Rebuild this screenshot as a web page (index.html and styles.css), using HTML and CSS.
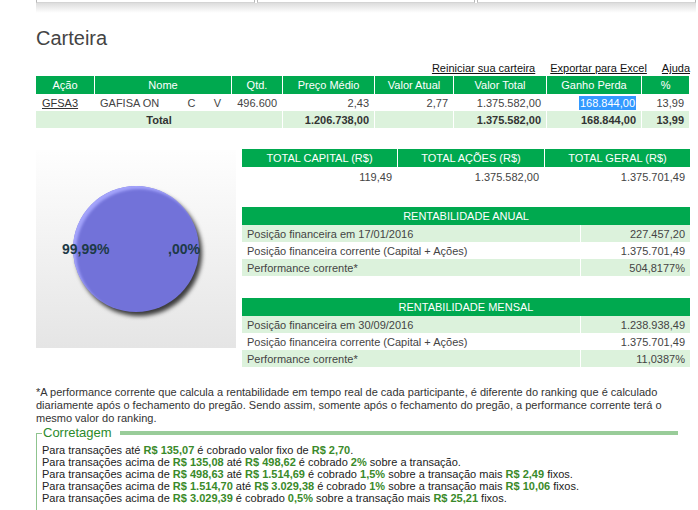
FILE: index.html
```html
<!DOCTYPE html>
<html lang="pt-BR">
<head>
<meta charset="utf-8">
<title>Carteira</title>
<link rel="stylesheet" href="styles.css">
</head>
<body>
<div class="topbar"><div class="tb-cell"></div><div class="tb-cell"></div><div class="tb-cell"></div></div>
<div class="topshadow"></div>
<main class="page">
  <h1 class="title">Carteira</h1>
  <nav class="links">
    <a href="#">Reiniciar sua carteira</a>
    <a href="#">Exportar para Excel</a>
    <a href="#">Ajuda</a>
  </nav>
  <table class="grid port">
    <colgroup>
      <col class="w58"><col class="w85"><col class="w24"><col class="w28"><col class="w51">
      <col class="w92"><col class="w79"><col class="w93"><col class="w95"><col class="w48">
    </colgroup>
    <thead>
      <tr><th>Ação</th><th colspan="3">Nome</th><th>Qtd.</th><th>Preço Médio</th><th>Valor Atual</th><th>Valor Total</th><th>Ganho Perda</th><th>%</th></tr>
    </thead>
    <tbody>
      <tr class="row">
        <td class="l pad6"><a href="#">GFSA3</a></td>
        <td class="l">GAFISA ON</td>
        <td class="c">C</td>
        <td class="c">V</td>
        <td class="r">496.600</td>
        <td class="r">2,43</td>
        <td class="r">2,77</td>
        <td class="r">1.375.582,00</td>
        <td class="r"><span class="sel">168.844,00</span></td>
        <td class="r">13,99</td>
      </tr>
      <tr class="tot">
        <td colspan="5" class="c">Total</td>
        <td class="r">1.206.738,00</td>
        <td></td>
        <td class="r">1.375.582,00</td>
        <td class="r">168.844,00</td>
        <td class="r">13,99</td>
      </tr>
    </tbody>
  </table>

  <section class="summary">
    <div class="chart">
      <div class="pie"></div>
      <span class="plabel pl-a">99,99%</span>
      <span class="plabel pl-b">,00%</span>
    </div>
    <div class="side">
      <table class="grid totals">
        <colgroup><col class="w155"><col class="w147"><col class="w146"></colgroup>
        <thead><tr><th>TOTAL CAPITAL (R$)</th><th>TOTAL AÇÕES (R$)</th><th>TOTAL GERAL (R$)</th></tr></thead>
        <tbody><tr class="row tall"><td class="r">119,49</td><td class="r">1.375.582,00</td><td class="r">1.375.701,49</td></tr></tbody>
      </table>

      <table class="grid rent">
        <colgroup><col class="w338"><col class="w110"></colgroup>
        <thead><tr><th colspan="2">RENTABILIDADE ANUAL</th></tr></thead>
        <tbody>
          <tr class="lg"><td class="l">Posição financeira em 17/01/2016</td><td class="r">227.457,20</td></tr>
          <tr class="row"><td class="l">Posição financeira corrente (Capital + Ações)</td><td class="r">1.375.701,49</td></tr>
          <tr class="lg"><td class="l">Performance corrente*</td><td class="r">504,8177%</td></tr>
        </tbody>
      </table>

      <table class="grid rent rent2">
        <colgroup><col class="w338"><col class="w110"></colgroup>
        <thead><tr><th colspan="2">RENTABILIDADE MENSAL</th></tr></thead>
        <tbody>
          <tr class="lg"><td class="l">Posição financeira em 30/09/2016</td><td class="r">1.238.938,49</td></tr>
          <tr class="row"><td class="l">Posição financeira corrente (Capital + Ações)</td><td class="r">1.375.701,49</td></tr>
          <tr class="lg"><td class="l">Performance corrente*</td><td class="r">11,0387%</td></tr>
        </tbody>
      </table>
    </div>
  </section>

  <p class="note">*A performance corrente que calcula a rentabilidade em tempo real de cada participante, é diferente do ranking que é calculado<br>diariamente após o fechamento do pregão. Sendo assim, somente após o fechamento do pregão, a performance corrente terá o<br>mesmo valor do ranking.</p>

  <section class="fees">
    <div class="fees-head">
      <span class="corner"></span>
      <span class="legend">Corretagem</span>
      <span class="bar"></span>
    </div>
    <div class="fees-body">
      <div>Para transações até <b>R$ 135,07</b> é cobrado valor fixo de <b>R$ 2,70</b>.</div>
      <div>Para transações acima de <b>R$ 135,08</b> até <b>R$ 498,62</b> é cobrado <b>2%</b> sobre a transação.</div>
      <div>Para transações acima de <b>R$ 498,63</b> até <b>R$ 1.514,69</b> é cobrado <b>1,5%</b> sobre a transação mais <b>R$ 2,49</b> fixos.</div>
      <div>Para transações acima de <b>R$ 1.514,70</b> até <b>R$ 3.029,38</b> é cobrado <b>1%</b> sobre a transação mais <b>R$ 10,06</b> fixos.</div>
      <div>Para transações acima de <b>R$ 3.029,39</b> é cobrado <b>0,5%</b> sobre a transação mais <b>R$ 25,21</b> fixos.</div>
    </div>
  </section>
</main>
</body>
</html>
```
FILE: styles.css
```css
* { box-sizing: border-box; }
html, body { margin: 0; padding: 0; background: #fff; }
body {
  font-family: "Liberation Sans", Arial, sans-serif;
  font-size: 11px;
  color: #333;
  width: 698px;
  overflow: hidden;
}

.topbar {
  margin-left: 36px;
  width: 660px;
  height: 3px;
  display: flex;
  gap: 2px;
}
.tb-cell {
  flex: 1;
  border-left: 1px solid #b8b8b8;
  border-right: 1px solid #b8b8b8;
  border-bottom: 1px solid #d4d4d4;
}
.topshadow {
  margin-left: 36px;
  width: 660px;
  height: 10px;
  background: linear-gradient(#dcdcdc, #ffffff);
}

.page {
  padding-left: 36px;
  width: 690px;
}

.title {
  margin: 14px 0 0;
  font-size: 20px;
  font-weight: normal;
  line-height: 23px;
  color: #444;
}

.links {
  margin-top: 12px;
  margin-bottom: 1px;
  display: flex;
  justify-content: flex-end;
  gap: 15px;
  line-height: 13px;
}
.links a { color: #111; text-decoration: underline; }

.grid {
  border-collapse: separate;
  border-spacing: 0;
  table-layout: fixed;
}
.grid th {
  background: #00a94f;
  color: #fff;
  font-weight: normal;
  height: 18px;
  line-height: 17px;
  padding: 0;
  text-align: center;
  border-left: 1px solid #fff;
  white-space: nowrap;
}
.grid th:first-child { border-left: none; }
.grid td {
  height: 17px;
  line-height: 16px;
  padding: 0 5px;
  color: #444;
  white-space: nowrap;
}
.grid .l { text-align: left; }
.grid .c { text-align: center; }
.grid .r { text-align: right; }
.grid .pad6 { padding-left: 6px; }
.grid td a { color: #333; text-decoration: underline; }

.port { width: 653px; }
.w58 { width: 58px; } .w85 { width: 85px; } .w24 { width: 24px; } .w28 { width: 28px; }
.w51 { width: 51px; } .w92 { width: 92px; } .w79 { width: 79px; } .w93 { width: 93px; }
.w95 { width: 95px; } .w48 { width: 48px; }
.w155 { width: 155px; } .w147 { width: 147px; } .w146 { width: 146px; }
.w338 { width: 338px; } .w110 { width: 110px; }

.port td.c { padding: 0; }
.sel { background: #3399ff; color: #fff; padding: 1px 1px; }

.tot td {
  background: #dcf2dc;
  font-weight: bold;
  color: #333;
  border-left: 1px solid #fff;
}
.tot td:first-child { border-left: none; }

.summary {
  margin-top: 21px;
  display: flex;
  align-items: flex-start;
  gap: 6px;
}
.chart {
  position: relative;
  margin-top: 1px;
  width: 200px;
  height: 198px;
  background: linear-gradient(#fefefe, #e5e5e5);
  display: flex;
  align-items: center;
  justify-content: center;
}
.pie {
  width: 126px;
  height: 126px;
  border-radius: 50%;
  background: #7272d9;
  box-shadow: inset 3px 3px 3px rgba(170, 170, 255, 0.9), 3px 4px 4px rgba(0, 0, 0, 0.75);
}
.plabel {
  position: absolute;
  top: 91px;
  font-size: 14px;
  font-weight: bold;
  line-height: 16px;
  color: #1d3a47;
}
.pl-a { left: 26px; }
.pl-b { left: 132px; }

.side { width: 448px; }
.totals, .rent { width: 448px; }
.tall td { height: 19px; line-height: 18px; }
.rent { margin-top: 21px; }
.rent2 { margin-top: 22px; }
.lg td {
  background: #dcf2dc;
}
.lg td + td { border-left: 1px solid #fff; }
.row td + td { border-left: 1px solid transparent; }

.note {
  margin: 19px 0 0;
  line-height: 13px;
  color: #333;
}

.fees {
  width: 642px;
}
.fees-head {
  display: flex;
  align-items: center;
  height: 16px;
}
.corner {
  align-self: flex-end;
  width: 6px;
  height: 8px;
  border-top: 1px solid #8fc48f;
  border-left: 1px solid #8fc48f;
}
.legend {
  padding-left: 1px;
  font-size: 13px;
  line-height: 16px;
  color: #2b8a2b;
}
.bar {
  flex: 1;
  margin-left: 8px;
  height: 4px;
  background: #99cc99;
}
.fees-body {
  border-left: 1px solid #8fc48f;
  padding: 3px 0 20px 5px;
  line-height: 12px;
  color: #222;
}
.fees-body b { color: #3a8a2a; font-weight: bold; }
```
